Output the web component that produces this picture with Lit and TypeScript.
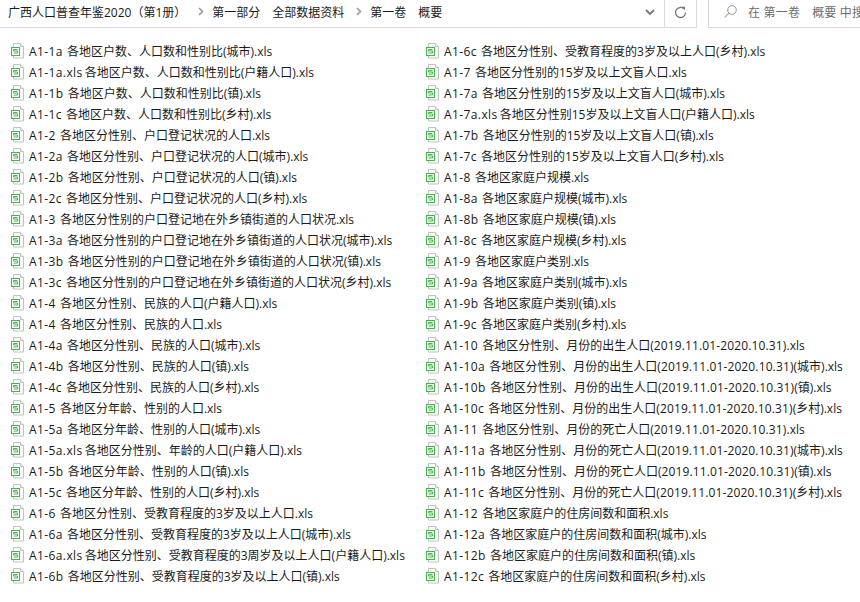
import {LitElement, html, css, svg} from 'lit';
import {customElement} from 'lit/decorators.js';

const suffixes = ['(城市)', '(镇)', '(乡村)'];

// one base name plus its 城市 / 镇 / 乡村 variants
function group(id: string, name: string): string[] {
    return [
        `A1-${id} ${name}.xls`,
        ...['a', 'b', 'c'].map((l, i) => `A1-${id}${l} ${name}${suffixes[i]}.xls`),
    ];
}

const RESIDENCE = '各地区分性别的户口登记地在外乡镇街道的人口状况';
const DATES = '(2019.11.01-2020.10.31)';
const BIRTH = `各地区分性别、月份的出生人口${DATES}`;
const DEATH = `各地区分性别、月份的死亡人口${DATES}`;

const files: string[] = [
    'A1-1a 各地区户数、人口数和性别比(城市).xls',
    'A1-1a.xls 各地区户数、人口数和性别比(户籍人口).xls',
    'A1-1b 各地区户数、人口数和性别比(镇).xls',
    'A1-1c 各地区户数、人口数和性别比(乡村).xls',
    ...group('2', '各地区分性别、户口登记状况的人口'),
    ...group('3', RESIDENCE),
    'A1-4 各地区分性别、民族的人口(户籍人口).xls',
    ...group('4', '各地区分性别、民族的人口'),
    'A1-5 各地区分年龄、性别的人口.xls',
    'A1-5a 各地区分年龄、性别的人口(城市).xls',
    'A1-5a.xls 各地区分性别、年龄的人口(户籍人口).xls',
    'A1-5b 各地区分年龄、性别的人口(镇).xls',
    'A1-5c 各地区分年龄、性别的人口(乡村).xls',
    'A1-6 各地区分性别、受教育程度的3岁及以上人口.xls',
    'A1-6a 各地区分性别、受教育程度的3岁及以上人口(城市).xls',
    'A1-6a.xls 各地区分性别、受教育程度的3周岁及以上人口(户籍人口).xls',
    'A1-6b 各地区分性别、受教育程度的3岁及以上人口(镇).xls',
    'A1-6c 各地区分性别、受教育程度的3岁及以上人口(乡村).xls',
    'A1-7 各地区分性别的15岁及以上文盲人口.xls',
    'A1-7a 各地区分性别的15岁及以上文盲人口(城市).xls',
    'A1-7a.xls 各地区分性别15岁及以上文盲人口(户籍人口).xls',
    'A1-7b 各地区分性别的15岁及以上文盲人口(镇).xls',
    'A1-7c 各地区分性别的15岁及以上文盲人口(乡村).xls',
    ...group('8', '各地区家庭户规模'),
    ...group('9', '各地区家庭户类别'),
    ...group('10', BIRTH),
    ...group('11', DEATH),
    ...group('12', '各地区家庭户的住房间数和面积'),
];

const fileIcon = svg`
    <path d="M2.500 .5h7l3 3v11.500h-10z" fill="#fff" stroke="#c2c2c2"/>
    <path d="M9.500 .5v3h3" fill="#f2f2f2" stroke="#c2c2c2"/>
    <rect x=".5" y="4.500" width="8" height="8" fill="#fff" stroke="#43b649"/>
    <path d="M6.500 6.500h-4v1.500h4v2h-4" fill="none" stroke="#43b649"/>
`;

const chevron = html`<svg class="chev" width="6" height="9" viewBox="0 0 6 9"><path d="M1 1l3.500 3.500-3.500 3.500" fill="none" stroke="#999" stroke-width="1.600"/></svg>`;

@customElement('app-root')
class AppRoot extends LitElement {

    private renderName(name: string) {
        const cut = name.indexOf(' ');
        const id = name.slice(0, cut);
        const [before, after] = name.slice(cut).split(DATES);
        return html`<span class="id ${id.endsWith('.xls') ? 'long' : ''}">${id}</span>${before}${after !== undefined
            ? html`<span class="dates">${DATES}</span>${after}`
            : ''}`;
    }

    render() {
        return html`
            <div class="toolbar">
                <div class="crumbs">
                    <span class="seg first">广西人口普查年鉴2020（第1册）</span>
                    ${chevron}
                    <span class="seg">第一部分</span>
                    <span class="seg">全部数据资料</span>
                    ${chevron}
                    <span class="seg">第一卷</span>
                    <span class="seg">概要</span>
                </div>
                <div class="btn drop">
                    <svg width="10" height="7" viewBox="0 0 10 7"><path d="M1 1l4 4 4-4" fill="none" stroke="#777" stroke-width="1.800"/></svg>
                </div>
                <div class="btn refresh">
                    <svg width="13" height="13" viewBox="0 0 13 13"><path d="M9.800 2.700a5 5 0 1 0 1.700 3.800" fill="none" stroke="#777" stroke-width="1.300"/><path d="M7.500 .8h3.500v3.500z" fill="#777"/></svg>
                </div>
                <div class="gap"></div>
                <div class="search">
                    <svg width="13" height="13" viewBox="0 0 13 13"><circle cx="8" cy="5" r="4.300" fill="none" stroke="#9a9a9a"/><path d="M4.900 8.100l-4.200 4.200" stroke="#c9a27a" stroke-width="1.200"/></svg>
                    <span class="hint">在 第一卷<span class="wide">概要</span> 中搜索</span>
                </div>
            </div>
            <div class="list">
                ${files.map((name) => html`
                    <div class="file">
                        <svg class="icon" width="13" height="16" viewBox="0 0 13 16">${fileIcon}</svg>
                        <span class="name">${this.renderName(name)}</span>
                    </div>
                `)}
            </div>
        `;
    }

    static styles = css`
        :host {
            display: block;
            width: 860px;
            height: 602px;
            overflow: hidden;
            background: #fff;
            color: #1a1a1a;
            font-family: "Open Sans", "Noto Sans CJK SC", sans-serif;
            font-size: 12px;
        }

        .toolbar {
            display: flex;
            align-items: stretch;
            height: 28px;
        }

        .toolbar > * {
            box-sizing: border-box;
        }

        .crumbs, .btn, .search {
            border-bottom: 1px solid #d9d9d9;
        }

        .crumbs {
            flex: none;
            width: 636px;
            display: flex;
            align-items: center;
            padding: 0 0 4px 8px;
            white-space: nowrap;
            overflow: hidden;
        }

        .seg {
            margin-right: 12px;
        }

        .chev {
            margin-right: 8px;
            flex: none;
        }

        .btn {
            flex: none;
            display: flex;
            align-items: center;
            justify-content: center;
            padding-bottom: 3px;
        }

        .drop {
            width: 28px;
        }

        .refresh {
            width: 33px;
            border-left: 1px solid #d9d9d9;
            border-right: 1px solid #d9d9d9;
        }

        .gap {
            flex: none;
            width: 11px;
        }

        .search {
            flex: 1;
            display: flex;
            align-items: center;
            gap: 11px;
            padding: 0 0 4px 15px;
            border-left: 1px solid #d9d9d9;
            white-space: nowrap;
            overflow: hidden;
        }

        .search svg {
            flex: none;
        }

        .hint {
            color: #6d6d6d;
            letter-spacing: .2px;
        }

        .wide {
            margin-left: 12px;
        }

        .list {
            display: grid;
            grid-template-rows: repeat(26, 21px);
            grid-auto-flow: column;
            grid-template-columns: 415px 1fr;
            padding: 12px 0 0 11px;
        }

        .file {
            display: flex;
            align-items: center;
            gap: 5px;
            white-space: nowrap;
        }

        .icon {
            flex: none;
        }

        .id {
            letter-spacing: .4px;
            margin-right: 1px;
        }

        .id.long {
            margin-right: -1px;
        }

        .dates {
            letter-spacing: .13px;
        }
    `;
}
